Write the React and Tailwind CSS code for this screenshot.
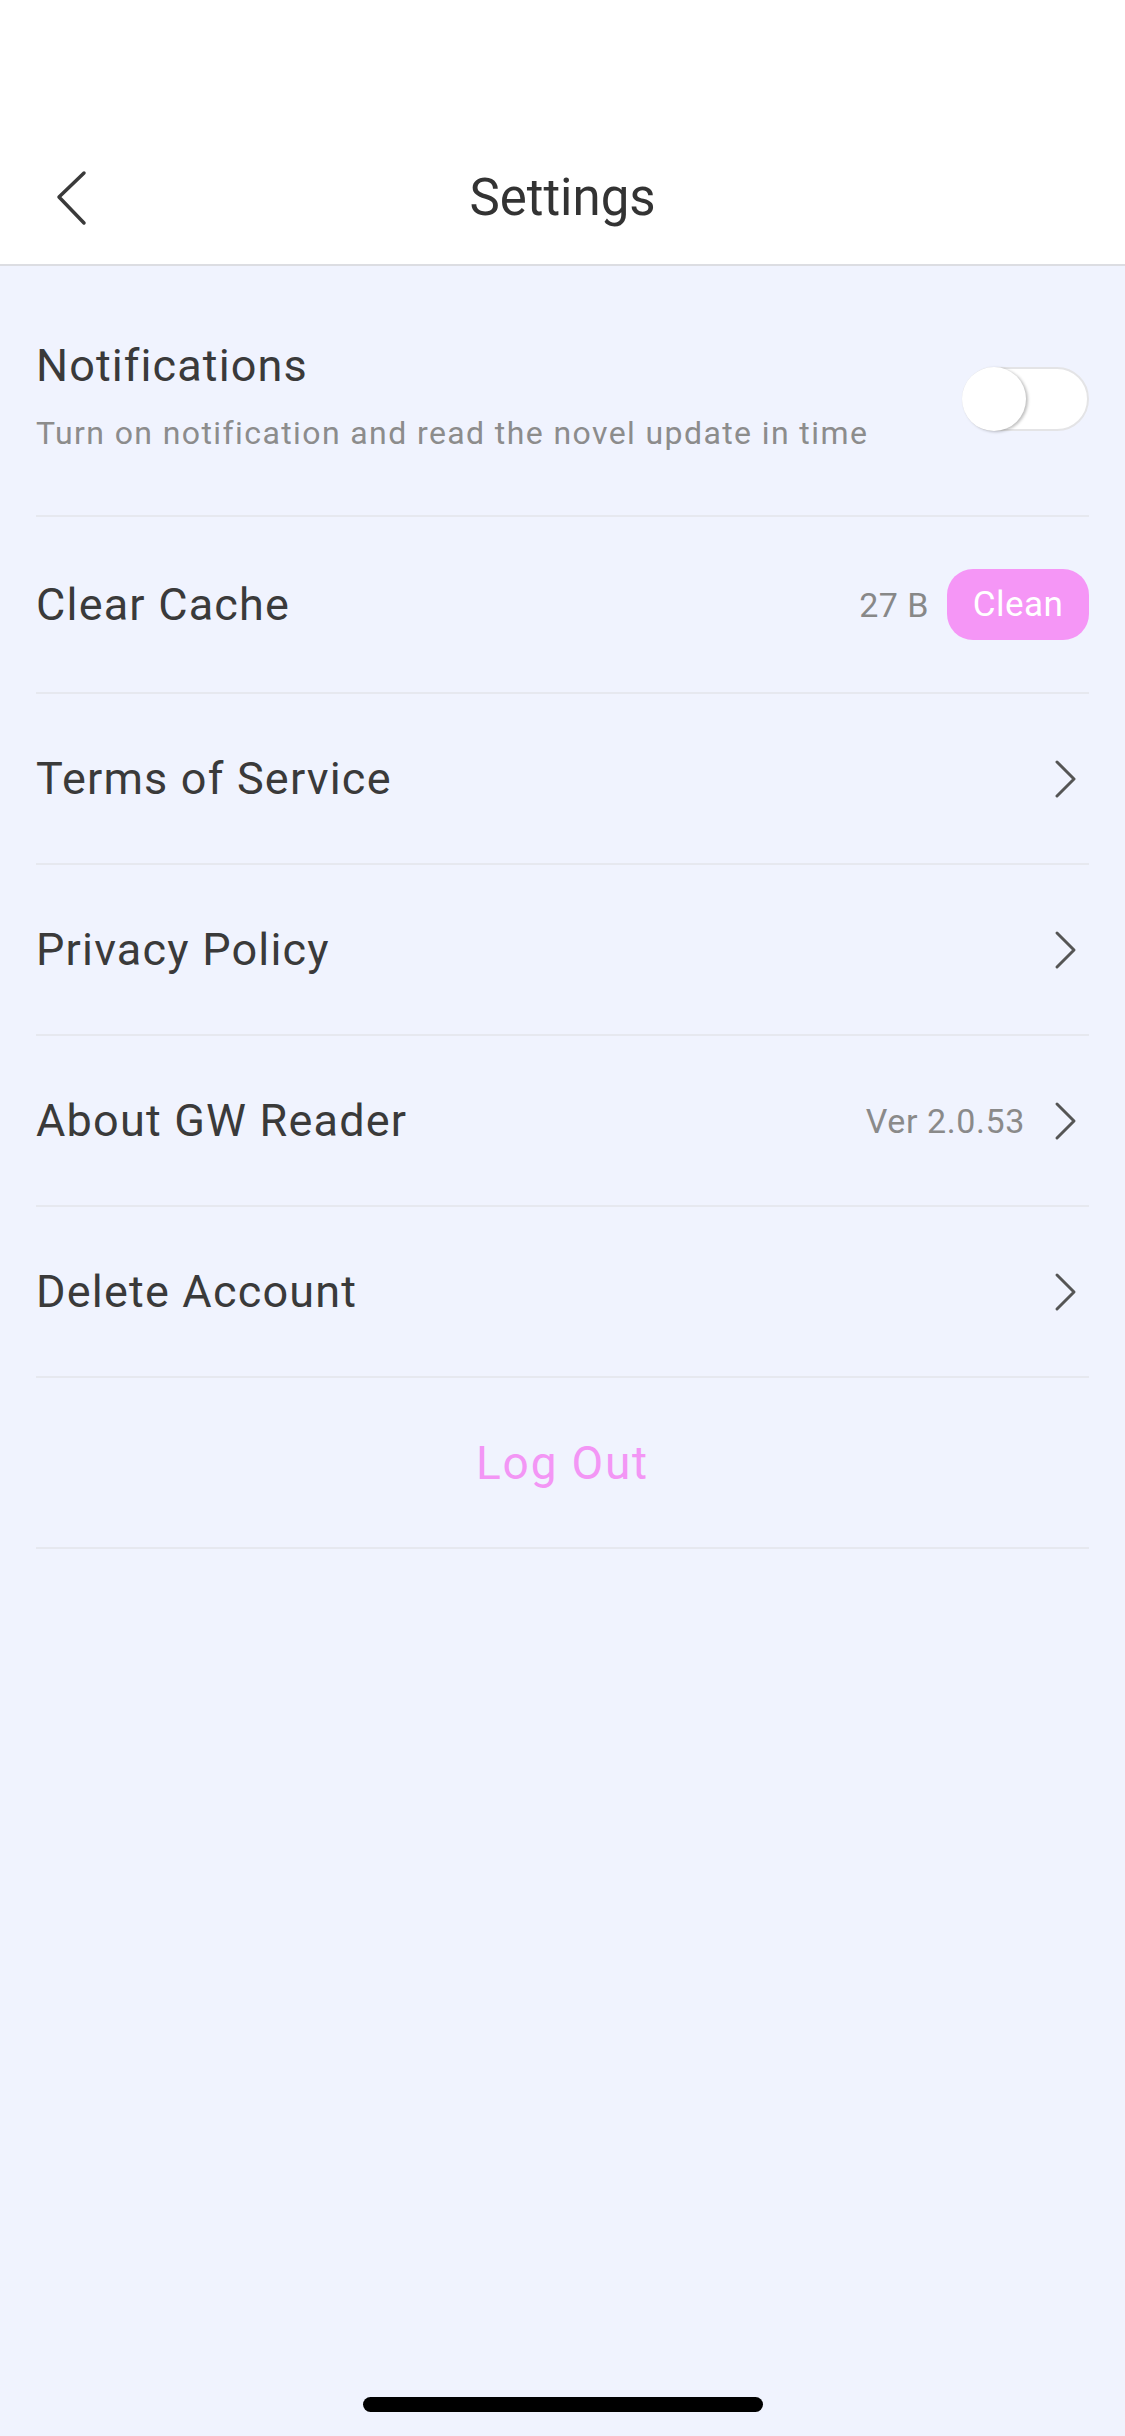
import React from "react";

const font = { fontFamily: "Roboto, 'Noto Sans', 'Liberation Sans', sans-serif" };

function ChevronRight() {
  return (
    <svg width="24" height="40" viewBox="0 0 24 40" className="shrink-0">
      <path d="M3 3 L20 20 L3 37" fill="none" stroke="#555555" strokeWidth="3" strokeLinecap="round" strokeLinejoin="round" />
    </svg>
  );
}

function Row({ label, right, children }) {
  return (
    <div className="flex h-[171px] items-center justify-between border-b-2 border-[#e6e8ef]">
      <span className="text-[45px] leading-[54px] tracking-[1.2px] text-[#3a3a3a]">{label}</span>
      <div className="flex items-center">
        {right}
        {children}
      </div>
    </div>
  );
}

export default function App() {
  return (
    <div className="flex h-[2436px] w-[1125px] flex-col bg-[#f0f3fe]" style={font}>
      <div className="h-[132px] bg-white" />
      <div className="relative flex h-[134px] items-center justify-center border-b-2 border-[#dcdde2] bg-white">
        <svg width="34" height="56" viewBox="0 0 34 56" className="absolute left-[54px] top-[38px]">
          <path d="M30 3 L5 27 L30 53" fill="none" stroke="#3a3a3a" strokeWidth="3.5" strokeLinecap="round" strokeLinejoin="round" />
        </svg>
        <span className="text-[51px] leading-[60px] text-[#333333]">Settings</span>
      </div>

      <div className="px-[36px]">
        <div className="flex h-[251px] items-start justify-between border-b-2 border-[#e6e8ef]">
          <div className="flex flex-col pt-[73px]">
            <span className="text-[45px] leading-[54px] tracking-[1.1px] text-[#3a3a3a]">Notifications</span>
            <span className="mt-[20px] text-[32px] leading-[40px] tracking-[1.4px] text-[#8c8c8c]">Turn on notification and read the novel update in time</span>
          </div>
          <div className="relative mt-[101px] h-[64px] w-[127px] rounded-full border-2 border-[#e4e4e6] bg-white">
            <div className="absolute left-[-2px] top-[-2px] h-[64px] w-[64px] rounded-full bg-white shadow-[2px_1px_3px_rgba(0,0,0,0.25)]" />
          </div>
        </div>

        <div className="flex h-[177px] items-center justify-between border-b-2 border-[#e6e8ef]">
          <span className="text-[45px] leading-[54px] tracking-[1.2px] text-[#3a3a3a]">Clear Cache</span>
          <div className="flex items-center">
            <span className="text-[34px] leading-[40px] tracking-[0.5px] text-[#888888]">27 B</span>
            <div className="ml-[18px] flex h-[71px] w-[142px] items-center justify-center rounded-[26px] bg-[#f596f6]">
              <span className="text-[35px] leading-[40px] tracking-[0.5px] text-white">Clean</span>
            </div>
          </div>
        </div>

        <Row label="Terms of Service">
          <div className="mr-[11px]"><ChevronRight /></div>
        </Row>
        <Row label="Privacy Policy">
          <div className="mr-[11px]"><ChevronRight /></div>
        </Row>
        <Row label="About GW Reader" right={<span className="mr-[29px] text-[34px] leading-[40px] tracking-[0.6px] text-[#8a8a8a]">Ver 2.0.53</span>}>
          <div className="mr-[11px]"><ChevronRight /></div>
        </Row>
        <Row label="Delete Account">
          <div className="mr-[11px]"><ChevronRight /></div>
        </Row>

        <div className="flex h-[171px] items-center justify-center border-b-2 border-[#e6e8ef]">
          <span className="text-[46px] leading-[54px] tracking-[1.8px] text-[#f396f5]">Log Out</span>
        </div>
      </div>

      <div className="flex-1" />
      <div className="mb-[24px] flex justify-center">
        <div className="h-[15px] w-[400px] rounded-full bg-black" />
      </div>
    </div>
  );
}
